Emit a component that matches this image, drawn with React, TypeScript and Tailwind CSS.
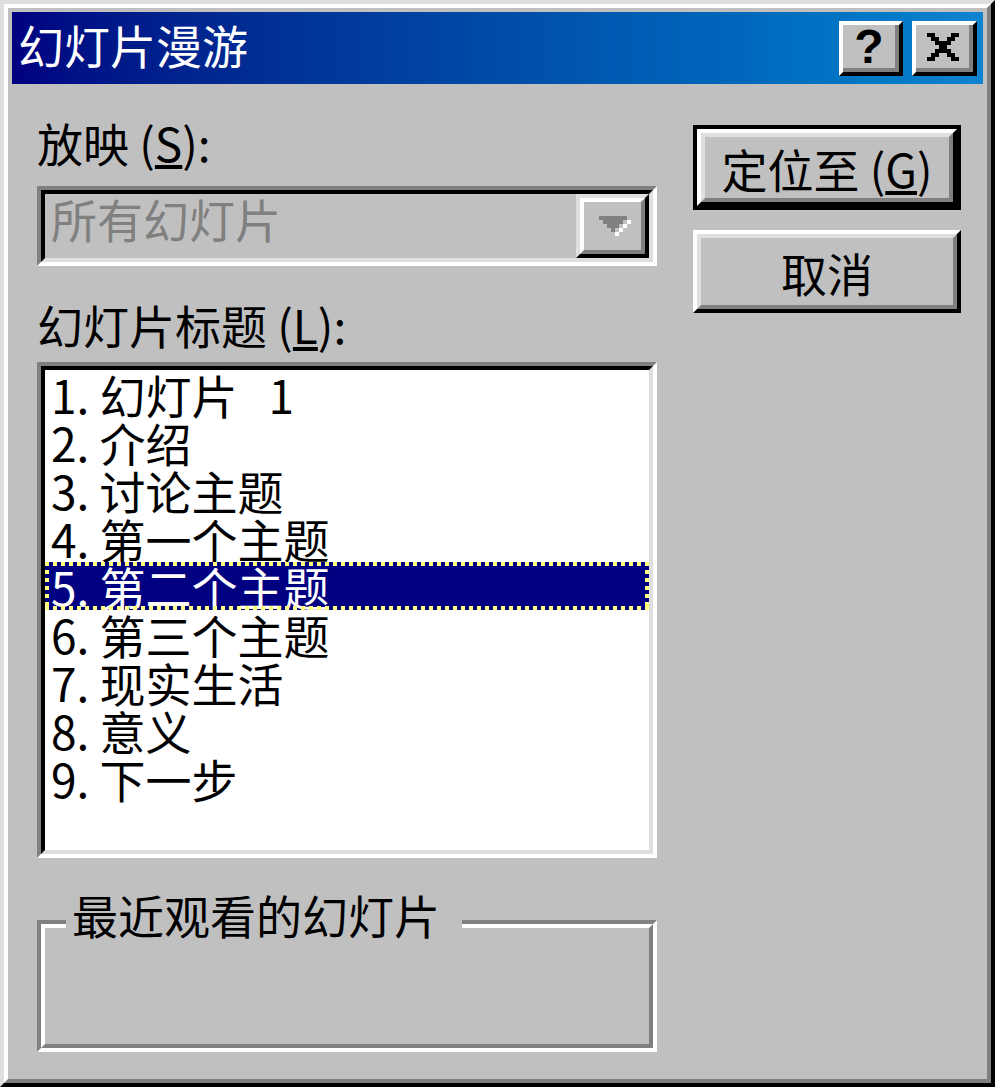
import React from 'react';

const slides = [
  '1. 幻灯片   1',
  '2. 介绍',
  '3. 讨论主题',
  '4. 第一个主题',
  '5. 第二个主题',
  '6. 第三个主题',
  '7. 现实生活',
  '8. 意义',
  '9. 下一步',
];

const CloseGlyph = () => (
  <svg width="32" height="28" viewBox="0 0 8 7" shapeRendering="crispEdges">
    <path
      fill="#000"
      d="M0 0h2v1H0zM6 0h2v1H6zM1 1h2v1H1zM5 1h2v1H5zM2 2h4v1H2zM3 3h2v1H3zM2 4h4v1H2zM1 5h2v1H1zM5 5h2v1H5zM0 6h2v1H0zM6 6h2v1H6z"
    />
  </svg>
);

const ArrowGlyph = () => (
  <svg width="32" height="20" viewBox="0 0 8 5" shapeRendering="crispEdges">
    <path fill="#fff" d="M7 1h1v1H7zM6 2h1v1H6zM5 3h1v1H5zM4 4h1v1H4z" />
    <path fill="#808080" d="M0 0h7v1H0zM1 1h5v1H1zM2 2h3v1H2zM3 3h1v1H3z" />
  </svg>
);

const FocusDots = () => (
  <>
    <div className="absolute left-0 right-0 top-0 h-[4px] bg-[repeating-linear-gradient(90deg,#ffff7f_0px,#ffff7f_4px,transparent_4px,transparent_8px)]" />
    <div className="absolute left-0 right-0 bottom-0 h-[4px] bg-[repeating-linear-gradient(90deg,#ffff7f_0px,#ffff7f_4px,transparent_4px,transparent_8px)]" />
    <div className="absolute left-0 top-0 bottom-0 w-[4px] bg-[repeating-linear-gradient(180deg,#ffff7f_0px,#ffff7f_4px,transparent_4px,transparent_8px)]" />
    <div className="absolute right-0 top-0 bottom-0 w-[4px] bg-[repeating-linear-gradient(180deg,#ffff7f_0px,#ffff7f_4px,transparent_4px,transparent_8px)]" />
  </>
);

export default function App() {
  const selected = 4;

  return (
    <div className="w-[995px] h-[1087px] bg-[#c0c0c0] text-black font-['Noto_Sans_CJK_SC','Noto_Sans',sans-serif]">
      <div className="h-full border-4 border-t-[#dfdfdf] border-l-[#dfdfdf] border-b-black border-r-black">
        <div className="h-full border-4 border-t-white border-l-white border-b-[#808080] border-r-[#808080] p-[4px] flex flex-col">
          {/* title bar */}
          <div className="h-[72px] flex justify-between bg-linear-to-r from-[#000080] to-[#1084d0]">
            <div className="pl-[6px] pt-[8px] text-[46px] leading-[48px] text-white">幻灯片漫游</div>
            <div className="flex gap-[9px] pt-[9px] pr-[6px]">
              <div className="w-[64px] h-[55px] border-4 border-t-white border-l-white border-b-black border-r-black">
                <div className="h-full border-b-4 border-r-4 border-[#808080] bg-[#c0c0c0] flex items-center justify-center font-['Liberation_Sans',sans-serif] font-bold text-[48px] leading-none">
                  ?
                </div>
              </div>
              <div className="w-[65px] h-[55px] border-4 border-t-white border-l-white border-b-black border-r-black">
                <div className="h-full border-b-4 border-r-4 border-[#808080] bg-[#c0c0c0] flex items-center justify-center">
                  <CloseGlyph />
                </div>
              </div>
            </div>
          </div>

          {/* body */}
          <div className="flex-1 flex gap-[36px] pl-[25px] pt-[34px]">
            <div className="w-[620px] flex flex-col">
              <div className="text-[46px] leading-[48px] whitespace-pre">
                放映 (<span className="underline">S</span>):
              </div>

              <div className="mt-[20px] h-[80px] border-4 border-t-[#808080] border-l-[#808080] border-b-white border-r-white">
                <div className="h-full border-4 border-t-black border-l-black border-b-[#dfdfdf] border-r-[#dfdfdf] flex">
                  <div className="flex-1 pl-[6px] text-[46px] leading-[48px] text-[#808080]">所有幻灯片</div>
                  <div className="w-[73px] border-4 border-t-[#dfdfdf] border-l-[#dfdfdf] border-b-black border-r-black">
                    <div className="h-full border-4 border-t-white border-l-white border-b-[#808080] border-r-[#808080] flex items-center justify-center pl-[4px]">
                      <ArrowGlyph />
                    </div>
                  </div>
                </div>
              </div>

              <div className="mt-[34px] text-[46px] leading-[48px] whitespace-pre">
                幻灯片标题 (<span className="underline">L</span>):
              </div>

              <div className="mt-[14px] h-[496px] border-4 border-t-[#808080] border-l-[#808080] border-b-white border-r-white">
                <div className="h-full border-4 border-t-black border-l-black border-b-[#dfdfdf] border-r-[#dfdfdf] bg-white">
                  {slides.map((s, i) => (
                    <div
                      key={s}
                      className={
                        i === selected
                          ? 'relative h-[48px] pl-[6px] text-[46px] leading-[48px] whitespace-pre bg-[#000080] text-white'
                          : 'h-[48px] pl-[6px] text-[46px] leading-[48px] whitespace-pre'
                      }
                    >
                      {s}
                      {i === selected && <FocusDots />}
                    </div>
                  ))}
                </div>
              </div>

              <div className="relative mt-[62px] h-[132px] border-4 border-t-[#808080] border-l-[#808080] border-b-white border-r-white">
                <div className="h-full border-4 border-t-white border-l-white border-b-[#808080] border-r-[#808080]" />
                <div className="absolute left-[25px] top-[-34px] pl-[6px] pr-[22px] bg-[#c0c0c0] text-[46px] leading-[48px]">
                  最近观看的幻灯片
                </div>
              </div>
            </div>

            <div className="w-[268px] flex flex-col pt-[7px]">
              <div className="h-[85px] border-4 border-black">
                <div className="h-full border-4 border-t-white border-l-white border-b-black border-r-black">
                  <div className="h-full border-4 border-t-[#dfdfdf] border-l-[#dfdfdf] border-b-[#808080] border-r-[#808080] flex items-center justify-center text-[46px] leading-[48px] whitespace-pre">
                    定位至 (<span className="underline">G</span>)
                  </div>
                </div>
              </div>
              <div className="mt-[20px] h-[83px] border-4 border-t-white border-l-white border-b-black border-r-black">
                <div className="h-full border-4 border-t-[#dfdfdf] border-l-[#dfdfdf] border-b-[#808080] border-r-[#808080] flex items-center justify-center text-[46px] leading-[48px]">
                  取消
                </div>
              </div>
            </div>
          </div>
        </div>
      </div>
    </div>
  );
}
